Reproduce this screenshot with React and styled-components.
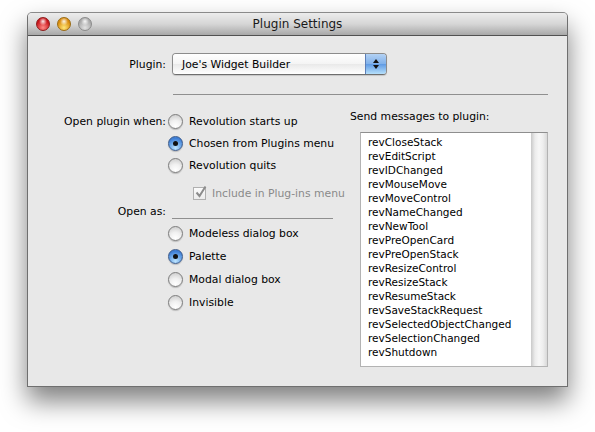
import React from 'react';
import styled, { createGlobalStyle } from 'styled-components';

const GlobalStyle = createGlobalStyle`
  body {
    margin: 0;
    background: #ffffff;
    font-family: 'Lucida Grande', 'DejaVu Sans', sans-serif;
    font-size: 10.8px;
    color: #000;
  }
`;

const Page = styled.div`
  width: 595px;
  height: 432px;
  padding: 12px 0 0 27px;
  box-sizing: border-box;
`;

const Window = styled.div`
  width: 541px;
  height: 375px;
  border: 1px solid #6f6f6f;
  border-top-color: #8a8a8a;
  border-radius: 5px 5px 0 0;
  box-sizing: border-box;
  background: #e8e8e8;
  box-shadow: 0 14px 26px rgba(0, 0, 0, 0.5);
  display: flex;
  flex-direction: column;
  overflow: hidden;
`;

const TitleBar = styled.div`
  height: 22px;
  flex: none;
  position: relative;
  display: flex;
  align-items: center;
  justify-content: center;
  background: linear-gradient(#ececec, #d6d6d6 50%, #a8a8a8);
  border-bottom: 1px solid #515151;
  font-size: 12px;
  color: #1a1a1a;
`;

const Lights = styled.div`
  position: absolute;
  left: 8px;
  top: 4px;
  display: flex;
  gap: 7px;
`;

const Light = styled.span`
  width: 14px;
  height: 14px;
  border-radius: 50%;
  box-sizing: border-box;
  border: 1px solid ${p => p.$edge};
  background:
    radial-gradient(circle at 50% 28%, rgba(255,255,255,0.9) 0, rgba(255,255,255,0) 38%),
    radial-gradient(circle at 50% 80%, ${p => p.$light} 0, ${p => p.$color} 65%);
`;

const Body = styled.div`
  flex: 1;
  display: flex;
  flex-direction: column;
`;

const PluginRow = styled.div`
  display: flex;
  align-items: center;
  margin-top: 17px;
  height: 22px;
`;

const Label = styled.div`
  width: 138px;
  flex: none;
  text-align: right;
  white-space: nowrap;
`;

const Popup = styled.div`
  margin-left: 6px;
  width: 215px;
  height: 22px;
  box-sizing: border-box;
  border: 1px solid #8c8c8c;
  border-bottom-color: #6e6e6e;
  border-radius: 4px;
  display: flex;
  overflow: hidden;
  box-shadow: 0 1px 1px rgba(0,0,0,0.15);
`;

const PopupText = styled.div`
  flex: 1;
  padding-left: 9px;
  display: flex;
  align-items: center;
  background: linear-gradient(#ffffff, #f4f4f4 50%, #e9e9e9 51%, #ffffff);
`;

const Stepper = styled.div`
  width: 20px;
  flex: none;
  border-left: 1px solid #5c7fb8;
  background: linear-gradient(#b4d2f4, #7fb0ea 50%, #5f9ae4 51%, #b6e0fb);
  display: flex;
  align-items: center;
  justify-content: center;
`;

const Separator = styled.div`
  margin: 19px 0 0 145px;
  width: 375px;
  height: 1px;
  background: #8f8f8f;
`;

const Lower = styled.div`
  display: flex;
`;

const LeftPane = styled.div`
  width: 322px;
  flex: none;
  padding-top: 15px;
  display: flex;
  flex-direction: column;
`;

const Row = styled.div`
  display: flex;
  align-items: center;
  height: ${p => p.$h || 22}px;
  margin-top: ${p => p.$mt || 0}px;
`;

const Control = styled.div`
  margin-left: ${p => p.$indent || 2}px;
  display: flex;
  align-items: center;
  gap: 6px;
  color: ${p => (p.$disabled ? '#8a8a8a' : '#000')};
  white-space: nowrap;
`;

const Radio = styled.span`
  width: 15px;
  height: 15px;
  box-sizing: border-box;
  border-radius: 50%;
  flex: none;
  display: flex;
  align-items: center;
  justify-content: center;
  border: 1px solid ${p => (p.$on ? '#3b5a8a' : '#7d7d7d')};
  background: ${p =>
    p.$on
      ? 'radial-gradient(circle at 50% 85%, #bfe6ff 0, #6ea8e8 45%, #3f7fd6 75%)'
      : 'radial-gradient(circle at 50% 85%, #ffffff 0, #f0f0f0 45%, #c6c6c6 100%)'};
  box-shadow: 0 1px 1px rgba(0,0,0,0.2);
  &::after {
    content: '';
    width: 5px;
    height: 5px;
    border-radius: 50%;
    background: #111;
    display: ${p => (p.$on ? 'block' : 'none')};
  }
`;

const Check = styled.span`
  width: 13px;
  height: 13px;
  box-sizing: border-box;
  border: 1px solid #b0b0b0;
  background: linear-gradient(#fbfbfb, #ececec);
  position: relative;
  flex: none;
`;

const GroupLine = styled.div`
  margin-left: 6px;
  width: 161px;
  height: 1px;
  background: #8f8f8f;
  align-self: flex-end;
`;

const RightPane = styled.div`
  padding-top: 15px;
  display: flex;
  flex-direction: column;
`;

const ListBox = styled.div`
  margin: 9px 0 0 10px;
  width: 188px;
  height: 235px;
  box-sizing: border-box;
  border: 1px solid #b3b3b3;
  border-top-color: #8e8e8e;
  background: #fff;
  display: flex;
`;

const Items = styled.div`
  flex: 1;
  padding: 2px 0 0 7px;
  font-size: 10.5px;
  line-height: 14px;
`;

const Scroll = styled.div`
  width: 16px;
  flex: none;
  background: linear-gradient(to right, #c9c9c9, #ececec 25%, #f7f7f7 50%, #eeeeee 75%, #d9d9d9);
`;

const messages = [
  'revCloseStack', 'revEditScript', 'revIDChanged', 'revMouseMove', 'revMoveControl',
  'revNameChanged', 'revNewTool', 'revPreOpenCard', 'revPreOpenStack', 'revResizeControl',
  'revResizeStack', 'revResumeStack', 'revSaveStackRequest', 'revSelectedObjectChanged',
  'revSelectionChanged', 'revShutdown',
];

function RadioItem({ label, on }) {
  return (
    <Control>
      <Radio $on={on} />
      <span>{label}</span>
    </Control>
  );
}

export default function App() {
  return (
    <>
      <GlobalStyle />
      <Page>
        <Window>
          <TitleBar>
            <Lights>
              <Light $color="#c8141a" $light="#ff8a86" $edge="#8e1a1a" />
              <Light $color="#d98a0a" $light="#ffe77a" $edge="#9a6a12" />
              <Light $color="#a9a9a9" $light="#e2e2e2" $edge="#8a8a8a" />
            </Lights>
            Plugin Settings
          </TitleBar>
          <Body>
            <PluginRow>
              <Label>Plugin:</Label>
              <Popup>
                <PopupText>Joe's Widget Builder</PopupText>
                <Stepper>
                  <svg width="8" height="12" viewBox="0 0 8 12">
                    <path d="M4 1 L7 5 L1 5 Z" fill="#111" />
                    <path d="M4 11 L7 7 L1 7 Z" fill="#111" />
                  </svg>
                </Stepper>
              </Popup>
            </PluginRow>
            <Separator />
            <Lower>
              <LeftPane>
                <Row>
                  <Label>Open plugin when:</Label>
                  <RadioItem label="Revolution starts up" />
                </Row>
                <Row>
                  <Label />
                  <RadioItem label="Chosen from Plugins menu" on />
                </Row>
                <Row>
                  <Label />
                  <RadioItem label="Revolution quits" />
                </Row>
                <Row $h={20} $mt={7}>
                  <Label />
                  <Control $indent={27} $disabled>
                    <Check>
                      <svg width="14" height="14" viewBox="0 0 14 14" style={{ position: 'absolute', left: 0, top: -3 }}>
                        <path d="M2.5 7.5 L5.5 11 L11.5 1.5" fill="none" stroke="#8c8c8c" strokeWidth="2" />
                      </svg>
                    </Check>
                    <span>Include in Plug-ins menu</span>
                  </Control>
                </Row>
                <Row $h={16}>
                  <Label>Open as:</Label>
                  <GroupLine />
                </Row>
                <Row $h={23} $mt={3}>
                  <Label />
                  <RadioItem label="Modeless dialog box" />
                </Row>
                <Row $h={23}>
                  <Label />
                  <RadioItem label="Palette" on />
                </Row>
                <Row $h={23}>
                  <Label />
                  <RadioItem label="Modal dialog box" />
                </Row>
                <Row $h={23}>
                  <Label />
                  <RadioItem label="Invisible" />
                </Row>
              </LeftPane>
              <RightPane>
                <div>Send messages to plugin:</div>
                <ListBox>
                  <Items>
                    {messages.map(m => (
                      <div key={m}>{m}</div>
                    ))}
                  </Items>
                  <Scroll />
                </ListBox>
              </RightPane>
            </Lower>
          </Body>
        </Window>
      </Page>
    </>
  );
}
